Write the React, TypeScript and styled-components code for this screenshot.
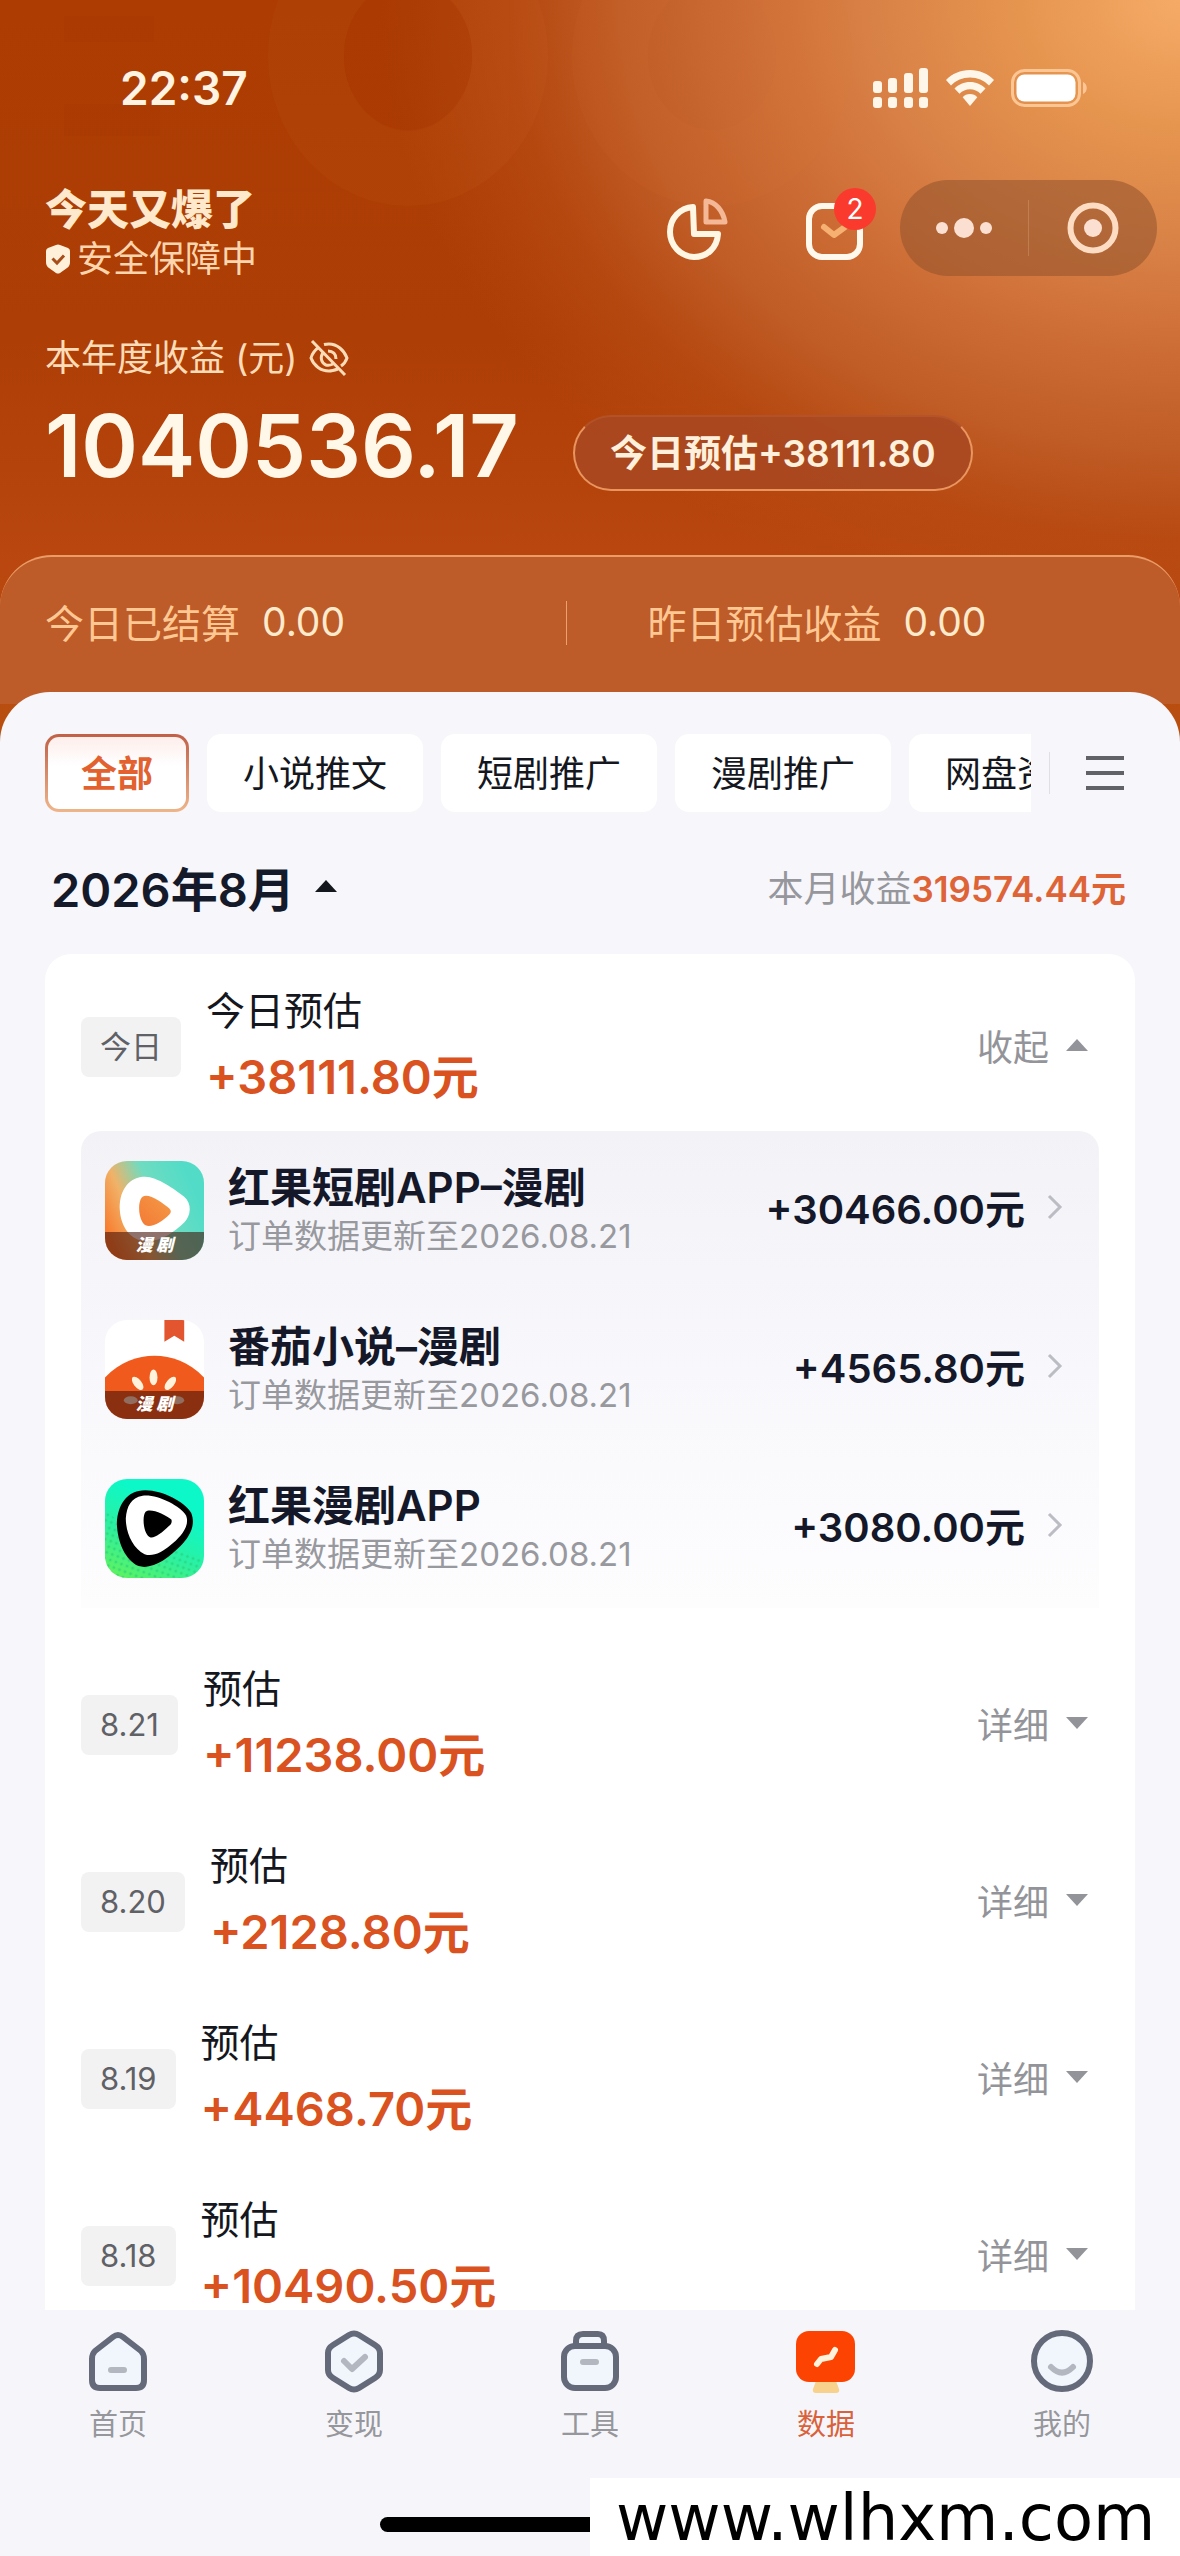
import React from 'react';
import styled, { createGlobalStyle, css } from 'styled-components';

const GlobalStyle = createGlobalStyle`
  * {
    box-sizing: border-box;
  }

  body {
    margin: 0;
    background: #f6f6fb;
    font-family: Inter, 'Noto Sans CJK SC', sans-serif;
  }

  button {
    font-family: inherit;
    border: none;
    padding: 0;
    background: none;
    cursor: pointer;
  }

  svg {
    display: block;
    flex: none;
  }
`;

const Page = styled.div`
  position: relative;
  display: flex;
  flex-direction: column;
  height: 100vh;
  overflow: hidden;
  background: #f6f6fb;
`;

const Hero = styled.header`
  position: relative;
  flex: none;
  height: 754px;
  margin-bottom: -62px;
  overflow: hidden;
  color: #fff3e2;
  background:
    radial-gradient(
      ellipse 800px 640px at 100% 0%,
      #f5ab66 0%,
      #e6954f 20%,
      #d98247 38%,
      #cf7038 52%,
      #c05c26 70%,
      rgba(184, 76, 20, 0.7) 84%,
      rgba(178, 66, 8, 0) 100%
    ),
    linear-gradient(180deg, #ac3c02 0%, #ad3e05 45%, #b9470f 75%, #b8500f 100%);
`;

const HeroPattern = styled.svg`
  position: absolute;
  top: 0;
  left: 0;
`;

const StatusBar = styled.div`
  position: relative;
  display: flex;
  align-items: center;
  justify-content: space-between;
  height: 176px;
  padding: 0 92px 0 120px;
`;

const Clock = styled.span`
  font-size: 46px;
  font-weight: 600;
`;

const StatusIcons = styled.div`
  display: flex;
  align-items: center;
  gap: 16px;
`;

const TopRow = styled.div`
  position: relative;
  display: flex;
  align-items: center;
  justify-content: space-between;
  height: 104px;
  padding: 0 23px 0 45px;
`;

const Greeting = styled.div`
  padding-top: 12px;
`;

const Title = styled.h1`
  margin: 0;
  font-size: 42px;
  line-height: 50px;
  font-weight: 900;
  color: #ffe9cc;
`;

const Security = styled.div`
  display: flex;
  align-items: center;
  gap: 6px;
  font-size: 36px;
  line-height: 48px;
  color: #ffd5ae;
`;

const Actions = styled.div`
  display: flex;
  align-items: center;
`;

const ActionButton = styled.button`
  position: relative;
  width: 68px;
  height: 68px;
  margin-right: 72px;
`;

const InboxButton = styled(ActionButton)`
  margin-right: 30px;
`;

const Badge = styled.span`
  position: absolute;
  top: -6px;
  right: -6px;
  width: 42px;
  height: 42px;
  border-radius: 50%;
  background: #fb3a2e;
  color: #fff;
  font-size: 28px;
  line-height: 42px;
  text-align: center;
`;

const Capsule = styled.div`
  display: flex;
  align-items: center;
  height: 96px;
  border-radius: 48px;
  background: rgba(146, 82, 44, 0.55);
`;

const CapsuleButton = styled.button`
  display: flex;
  align-items: center;
  justify-content: center;
  width: 128px;
  height: 96px;
`;

const CapsuleDivider = styled.span`
  width: 1px;
  height: 56px;
  background: rgba(255, 220, 190, 0.2);
`;

const YearLabel = styled.div`
  position: relative;
  display: flex;
  align-items: center;
  gap: 12px;
  margin-top: 52px;
  padding: 0 45px;
  font-size: 36px;
  line-height: 52px;
  color: #ffdcb8;
`;

const YearRow = styled.div`
  position: relative;
  display: flex;
  align-items: center;
  gap: 54px;
  height: 120px;
  margin-top: 2px;
  padding: 0 45px;
`;

const YearTotal = styled.strong`
  font-size: 86px;
  line-height: 104px;
  font-weight: 600;
  color: #fff8e8;
`;

const TodayPill = styled.button`
  height: 76px;
  margin-top: 14px;
  padding: 0 35px 4px;
  border: 2px solid rgba(255, 176, 116, 0.75);
  border-top-color: rgba(255, 176, 116, 0.1);
  border-radius: 38px;
  background: rgba(168, 72, 34, 0.85);
  color: #fff0dc;
  font-size: 37px;
  font-weight: 600;
`;

const Stats = styled.div`
  position: relative;
  display: flex;
  height: 149px;
  margin-top: 49px;
  padding-top: 32px;
  border-top: 2px solid #eb9d68;
  border-radius: 52px 52px 0 0;
  background: #bd5b29;
`;

const Stat = styled.div`
  display: flex;
  align-items: center;
  gap: 22px;
  width: 48%;
  height: 64px;
  padding-left: 45px;
  font-size: 39px;
  color: #ffc792;

  & + span + & {
    padding-left: 80px;
  }
`;

const StatDivider = styled.span`
  width: 1px;
  height: 44px;
  margin-top: 12px;
  background: rgba(255, 190, 140, 0.7);
`;

const StatValue = styled.span`
  color: #ffeacb;
`;

const Sheet = styled.main`
  position: relative;
  display: flex;
  flex: 1;
  flex-direction: column;
  min-height: 0;
  border-radius: 50px 50px 0 0;
  background: #f6f6fb;
`;

const FilterBar = styled.nav`
  display: flex;
  align-items: center;
  flex: none;
  padding: 42px 56px 0 45px;
`;

const FilterScroller = styled.div`
  display: flex;
  gap: 18px;
  flex: 1;
  overflow: hidden;
`;

const Chip = styled.button<{ $active?: boolean }>`
  flex: none;
  height: 78px;
  padding: 0 36px 4px;
  border-radius: 14px;
  background: #fff;
  color: #15171e;
  font-size: 36px;
  white-space: nowrap;

  ${({ $active }) =>
    $active &&
    css`
      padding: 0 33px 4px;
      border: 3px solid transparent;
      background:
        linear-gradient(180deg, #fdeeeb 0%, #fff 40%) padding-box,
        linear-gradient(180deg, #c06048 0%, #efb58a 100%) border-box;
      color: #e2612f;
      font-weight: 700;
    `}
`;

const FilterDivider = styled.span`
  width: 1px;
  height: 42px;
  margin: 0 36px 0 18px;
  background: #dfdfe4;
`;

const MonthRow = styled.div`
  display: flex;
  align-items: center;
  justify-content: space-between;
  flex: none;
  height: 142px;
  padding: 6px 54px 0 51px;
`;

const MonthButton = styled.button`
  display: flex;
  align-items: center;
  gap: 20px;
  color: #141a29;
  font-size: 47px;
  font-weight: 600;
`;

const MonthTotal = styled.div`
  color: #96979c;
  font-size: 36px;

  strong {
    color: #de6438;
    font-size: 35px;
    font-weight: 600;
  }
`;

const Card = styled.section`
  flex: 1;
  min-height: 0;
  margin: 0 45px;
  padding: 0 36px;
  overflow: hidden;
  border-radius: 26px 26px 0 0;
  background: #fff;
`;

const DayRow = styled.div`
  display: flex;
  align-items: center;
  height: 177px;
  padding: 8px 11px 0 0;
`;

const DayTag = styled.span`
  margin-right: 25px;
  padding: 0 19px;
  border-radius: 8px;
  background: #f2f2f3;
  color: #5f6166;
  font-size: 31px;
  line-height: 60px;
`;

const DayInfo = styled.div`
  flex: 1;
`;

const DayLabel = styled.div`
  color: #15171e;
  font-size: 39px;
  line-height: 60px;
`;

const DayAmount = styled.div`
  color: #d9521f;
  font-size: 47px;
  line-height: 72px;
  font-weight: 600;
`;

const ToggleButton = styled.button`
  display: flex;
  align-items: center;
  gap: 17px;
  padding-bottom: 4px;
  color: #939499;
  font-size: 36px;
`;

const AppList = styled.ul`
  margin: 0 0 24px;
  padding: 0 24px;
  border-radius: 20px 20px 0 0;
  background: linear-gradient(180deg, #f3f3f7 0%, #f8f8fc 50%, #fdfdfe 100%);
  list-style: none;
`;

const AppRow = styled.li`
  display: flex;
  align-items: center;
  height: 159px;
`;

const AppIcon = styled.span`
  position: relative;
  flex: none;
  width: 99px;
  height: 99px;
  margin-right: 24px;
  overflow: hidden;
  border-radius: 22px;
`;

const AppIconLabel = styled.span`
  position: absolute;
  right: 0;
  bottom: 0;
  left: 0;
  height: 28px;
  background: rgba(70, 20, 10, 0.6);
  color: #fff;
  font-size: 17px;
  line-height: 26px;
  font-weight: 900;
  font-style: italic;
  text-align: center;
`;

const AppText = styled.div`
  flex: 1;
`;

const AppName = styled.div`
  color: #141828;
  font-size: 42px;
  line-height: 50px;
  font-weight: 600;
`;

const AppNote = styled.div`
  color: #98999e;
  font-size: 33px;
  line-height: 46px;
`;

const AppLink = styled.a`
  display: flex;
  align-items: center;
  gap: 22px;
  padding-bottom: 8px;
  color: #141828;
  font-size: 40px;
  font-weight: 600;
  text-decoration: none;
`;

const TabBar = styled.nav`
  display: flex;
  flex: none;
  height: 246px;
  padding-top: 19px;
  background: #f6f6fa;
`;

const Tab = styled.a<{ $active?: boolean }>`
  display: flex;
  flex: 1;
  flex-direction: column;
  align-items: center;
  color: ${({ $active }) => ($active ? '#d9623c' : '#96979c')};
  font-size: 29px;
  line-height: 40px;
  text-decoration: none;

  svg {
    margin-bottom: 12px;
  }
`;

const HomeIndicator = styled.div`
  position: absolute;
  bottom: 24px;
  left: 50%;
  width: 420px;
  height: 15px;
  margin-left: -210px;
  border-radius: 8px;
  background: #000;
`;

const SiteMark = styled.a`
  position: absolute;
  right: 0;
  bottom: 0;
  width: 50%;
  height: 78px;
  padding-left: 26px;
  background: #fff;
  color: #000;
  font-family: 'DejaVu Sans', sans-serif;
  font-size: 64px;
  line-height: 80px;
  text-decoration: none;
  white-space: nowrap;
`;

interface AppEarning {
  name: string;
  amount: string;
  icon: React.ReactNode;
  tagged: boolean;
}

interface Day {
  date: string;
  amount: string;
}

const Triangle = ({ up, color }: { up?: boolean; color: string }) => (
  <svg width="22" height="12" viewBox="0 0 22 12">
    <path d={up ? 'M11 0 22 12H0Z' : 'M0 0H22L11 12Z'} fill={color} />
  </svg>
);

const SignalIcon = () => (
  <svg width="56" height="40" viewBox="0 0 56 40" fill="#fff6ea">
    <rect x="0" y="13" width="9" height="12" rx="3" />
    <rect x="15" y="10" width="9" height="15" rx="3" />
    <rect x="31" y="5" width="9" height="20" rx="3" />
    <rect x="46" y="0" width="9" height="25" rx="3" />
    <rect x="0" y="29" width="9" height="11" rx="3" />
    <rect x="15" y="29" width="9" height="11" rx="3" />
    <rect x="31" y="29" width="9" height="11" rx="3" />
    <rect x="46" y="29" width="9" height="11" rx="3" />
  </svg>
);

const WifiIcon = () => (
  <svg width="50" height="38" viewBox="0 0 50 38" fill="#fff6ea">
    <path d="M25 1C34.500 1 43 4.700 49 11L44 16.500C39 11.300 32.400 8.500 25 8.500S11 11.300 6 16.500L1 11C7 4.700 15.500 1 25 1Z" />
    <path d="M25 13C31 13 36.500 15.400 40.500 19.500L35.500 24.800C32.700 22 29 20.300 25 20.300S17.300 22 14.500 24.800L9.500 19.500C13.500 15.400 19 13 25 13Z" />
    <path d="M25 25C28 25 30.400 26.200 32.300 28.200L25 37 17.700 28.200C19.600 26.200 22 25 25 25Z" />
  </svg>
);

const BatteryIcon = () => (
  <svg width="77" height="38" viewBox="0 0 77 38">
    <rect x="1.500" y="1.500" width="67" height="35" rx="12" fill="none" stroke="#fbc694" strokeWidth="3" />
    <rect x="5.500" y="5.500" width="59" height="27" rx="8" fill="#fff" />
    <path d="M72 13C77 15 77 23 72 25Z" fill="#fbc694" />
  </svg>
);

const ShieldIcon = () => (
  <svg width="26" height="30" viewBox="0 0 26 30">
    <path
      d="M11 1Q13 0 15 1L23 4Q25 5 25 7V18Q25 22 22 24L15 29Q13 30 11 29L4 24Q1 22 1 18V7Q1 5 3 4Z"
      fill="#fff0da"
    />
    <path d="M7.500 14.500 12 19 19 11.500" fill="none" stroke="#a84c18" strokeWidth="3" />
  </svg>
);

const HiddenEyeIcon = () => (
  <svg width="40" height="38" viewBox="0 0 40 38" fill="none" stroke="#ffdcb8" strokeWidth="3">
    <path d="M10 8C6 11 3 15 2 19 5 27 12 32 20 32 23 32 26 31 29 30M15 5.500C17 5 18 5 20 5 28 5 35 11 38 19 37 22 35 25 32 27" />
    <path d="M14 14C11 18 12 24 17 26 20 27 22 26 24 25M19 12C24 12 27 15 27 20" />
    <path d="M3 2 36 36" />
  </svg>
);

const PieIcon = () => (
  <svg width="68" height="68" viewBox="0 0 68 68" fill="none" strokeLinejoin="round">
    <path d="M31 13C18 14 8 24 8 38A25 25 0 0 0 32 63C45 63 55 54 56 40H32Z" stroke="#fff6e4" strokeWidth="6" />
    <path d="M44 7V28H63C61 17 54 8 44 7Z" stroke="#f4b896" strokeWidth="5" />
  </svg>
);

const InboxIcon = () => (
  <svg width="68" height="68" viewBox="0 0 68 68" fill="none">
    <rect x="7" y="12" width="51" height="51" rx="13" stroke="#fff8ec" strokeWidth="6" />
    <path d="M22 33 32 41 43 33" stroke="#f5b072" strokeWidth="6" strokeLinecap="round" strokeLinejoin="round" />
  </svg>
);

const ShortDramaIcon = () => (
  <svg width="99" height="99" viewBox="0 0 100 100">
    <defs>
      <linearGradient id="short-bg" x1="0" y1="0.700" x2="0.900" y2="0.300">
        <stop offset="0" stopColor="#f97a2c" />
        <stop offset="0.300" stopColor="#f0b268" />
        <stop offset="0.600" stopColor="#6fdcc0" />
        <stop offset="1" stopColor="#52dcc8" />
      </linearGradient>
      <linearGradient id="short-play" x1="0" y1="1" x2="1" y2="0">
        <stop offset="0" stopColor="#f37a34" />
        <stop offset="1" stopColor="#f49a48" />
      </linearGradient>
    </defs>
    <rect width="100" height="100" fill="url(#short-bg)" />
    <path
      d="M38 16C50 14 70 28 80 36 88 43 87 55 80 62 71 71 58 80 44 81 26 82 16 66 15 50 14 32 22 18 38 16Z"
      fill="#fff"
    />
    <path d="M38 36C44 32 58 42 65 48 67 50 67 52 65 54 58 61 47 68 41 65 34 61 32 41 38 36Z" fill="url(#short-play)" />
  </svg>
);

const TomatoIcon = () => (
  <svg width="99" height="99" viewBox="0 0 100 100">
    <rect width="100" height="100" fill="#fff" />
    <path d="M60 0H80V22L70 16 60 22Z" fill="#e2552f" />
    <path d="M0 58C15 42 33 36 50 36S85 42 100 58V100H0Z" fill="#f05a1c" />
    <ellipse cx="49" cy="58" rx="4" ry="8" fill="#fff3dc" />
    <ellipse cx="33" cy="64" rx="4" ry="8" transform="rotate(-38 33 64)" fill="#fff3dc" />
    <ellipse cx="66" cy="64" rx="4" ry="8" transform="rotate(38 66 64)" fill="#fff3dc" />
    <ellipse cx="26" cy="81" rx="7" ry="4" fill="#fff3dc" />
    <ellipse cx="73" cy="81" rx="7" ry="4" fill="#fff3dc" />
  </svg>
);

const ComicDramaIcon = () => (
  <svg width="99" height="99" viewBox="0 0 100 100">
    <defs>
      <linearGradient id="comic-bg" x1="0.100" y1="1" x2="0.500" y2="0.200">
        <stop offset="0" stopColor="#62f25c" />
        <stop offset="0.500" stopColor="#2df0a0" />
        <stop offset="1" stopColor="#0cf8c8" />
      </linearGradient>
      <pattern id="comic-dots" width="6" height="6" patternUnits="userSpaceOnUse" patternTransform="rotate(20)">
        <circle cx="3" cy="3" r="1.500" fill="#22cf78" />
      </pattern>
    </defs>
    <rect width="100" height="100" fill="url(#comic-bg)" />
    <path d="M0 30 30 60 100 80V100H0Z" fill="url(#comic-dots)" opacity="0.600" />
    <path d="M34 12C52 8 80 22 87 34 92 46 86 58 76 68 64 80 48 92 34 88 20 82 12 62 12 44 13 26 22 14 34 12Z" fill="#000" />
    <path d="M38 17C52 15 76 27 82 37 86 48 76 59 66 67 58 74 48 79 40 76 28 70 21 54 21 40 22 28 26 19 38 17Z" fill="#fff" />
    <path d="M41 33C46 29 61 36 67 41 68 43 67 46 64 48 58 54 50 60 46 59 39 57 37 38 41 33Z" fill="#000" />
  </svg>
);

const line = { fill: '#f1f6fd', stroke: '#656a7a', strokeWidth: 6, strokeLinejoin: 'round' as const };
const accent = {
  fill: 'none',
  stroke: '#b3b7bf',
  strokeWidth: 6,
  strokeLinecap: 'round' as const,
  strokeLinejoin: 'round' as const,
};

const tabs = [
  {
    label: '首页',
    icon: (
      <>
        <path d="M27 8Q32 4 37 8L55 22Q58 25 58 30V51Q58 59 50 59H14Q6 59 6 51V30Q6 25 9 22Z" {...line} />
        <path d="M25 41H38" {...accent} />
      </>
    ),
  },
  {
    label: '变现',
    icon: (
      <>
        <path d="M27 6Q32 3 37 6L53 16Q58 19 58 24V41Q58 46 53 49L37 59Q32 62 27 59L11 49Q6 46 6 41V24Q6 19 11 16Z" {...line} />
        <path d="M22 32 30 40 43 28" {...accent} />
      </>
    ),
  },
  {
    label: '工具',
    icon: (
      <>
        <path d="M18 17V12Q18 5 25 5H40Q46 5 46 12V17" {...line} />
        <rect x="6" y="17" width="52" height="42" rx="11" {...line} />
        <path d="M25 33H38" {...accent} />
      </>
    ),
  },
  {
    label: '数据',
    active: true,
    icon: (
      <>
        <path d="M22 52H42L45 60Q46 64 42 64H22Q18 64 19 60Z" fill="#f8d28c" />
        <rect x="2" y="2" width="59" height="51" rx="13" fill="#fc4302" />
        <path
          d="M23 35 27 30 37 28 41 21"
          fill="none"
          stroke="#fff3dc"
          strokeWidth="6"
          strokeLinecap="round"
          strokeLinejoin="round"
        />
      </>
    ),
  },
  {
    label: '我的',
    icon: (
      <>
        <circle cx="32" cy="32" r="28" {...line} />
        <path d="M21 38Q32 49 43 38" {...accent} />
      </>
    ),
  },
];

const filters = ['全部', '小说推文', '短剧推广', '漫剧推广', '网盘资源'];

const apps: AppEarning[] = [
  { name: '红果短剧APP–漫剧', amount: '+30466.00元', icon: <ShortDramaIcon />, tagged: true },
  { name: '番茄小说–漫剧', amount: '+4565.80元', icon: <TomatoIcon />, tagged: true },
  { name: '红果漫剧APP', amount: '+3080.00元', icon: <ComicDramaIcon />, tagged: false },
];

const days: Day[] = [
  { date: '8.21', amount: '+11238.00元' },
  { date: '8.20', amount: '+2128.80元' },
  { date: '8.19', amount: '+4468.70元' },
  { date: '8.18', amount: '+10490.50元' },
];

const App: React.FC = () => (
  <>
    <GlobalStyle />
    <Page>
      <Hero>
        <HeroPattern width="1180" height="340" viewBox="0 0 1180 340">
          <g fill="none" stroke="#e07a3a" strokeWidth="76" opacity="0.070">
            <ellipse cx="408" cy="56" rx="102" ry="112" />
            <ellipse cx="712" cy="56" rx="102" ry="112" />
          </g>
          <g fill="#a03000" opacity="0.120">
            <rect x="64" y="16" width="90" height="26" />
            <rect x="64" y="104" width="96" height="32" />
            <ellipse cx="408" cy="56" rx="64" ry="75" />
          </g>
        </HeroPattern>
        <StatusBar>
          <Clock>22:37</Clock>
          <StatusIcons>
            <SignalIcon />
            <WifiIcon />
            <BatteryIcon />
          </StatusIcons>
        </StatusBar>

        <TopRow>
          <Greeting>
            <Title>今天又爆了</Title>
            <Security>
              <ShieldIcon />
              安全保障中
            </Security>
          </Greeting>
          <Actions>
            <ActionButton aria-label="统计">
              <PieIcon />
            </ActionButton>
            <InboxButton aria-label="消息">
              <InboxIcon />
              <Badge>2</Badge>
            </InboxButton>
            <Capsule>
              <CapsuleButton aria-label="更多">
                <svg width="56" height="22" viewBox="0 0 56 22" fill="#fbe0d2">
                  <circle cx="6" cy="11" r="6" />
                  <circle cx="28" cy="11" r="10" />
                  <circle cx="50" cy="11" r="6" />
                </svg>
              </CapsuleButton>
              <CapsuleDivider />
              <CapsuleButton aria-label="关闭">
                <svg width="52" height="52" viewBox="0 0 52 52">
                  <circle cx="26" cy="26" r="22.500" fill="none" stroke="#fddcc4" strokeWidth="6" />
                  <circle cx="26" cy="26" r="9" fill="#fbe0d2" />
                </svg>
              </CapsuleButton>
            </Capsule>
          </Actions>
        </TopRow>

        <YearLabel>
          本年度收益 (元)
          <HiddenEyeIcon />
        </YearLabel>
        <YearRow>
          <YearTotal>1040536.17</YearTotal>
          <TodayPill>今日预估+38111.80</TodayPill>
        </YearRow>

        <Stats>
          <Stat>
            今日已结算 <StatValue>0.00</StatValue>
          </Stat>
          <StatDivider />
          <Stat>
            昨日预估收益 <StatValue>0.00</StatValue>
          </Stat>
        </Stats>
      </Hero>

      <Sheet>
        <FilterBar>
          <FilterScroller>
            {filters.map((filter, index) => (
              <Chip key={filter} $active={index === 0}>
                {filter}
              </Chip>
            ))}
          </FilterScroller>
          <FilterDivider />
          <button aria-label="全部分类">
            <svg width="38" height="34" viewBox="0 0 38 34" fill="#606268">
              <rect width="38" height="4" />
              <rect y="15" width="38" height="4" />
              <rect y="30" width="38" height="4" />
            </svg>
          </button>
        </FilterBar>

        <MonthRow>
          <MonthButton>
            2026年8月
            <Triangle up color="#15171e" />
          </MonthButton>
          <MonthTotal>
            本月收益<strong>319574.44元</strong>
          </MonthTotal>
        </MonthRow>

        <Card>
          <DayRow>
            <DayTag>今日</DayTag>
            <DayInfo>
              <DayLabel>今日预估</DayLabel>
              <DayAmount>+38111.80元</DayAmount>
            </DayInfo>
            <ToggleButton>
              收起
              <Triangle up color="#939499" />
            </ToggleButton>
          </DayRow>

          <AppList>
            {apps.map((app) => (
              <AppRow key={app.name}>
                <AppIcon>
                  {app.icon}
                  {app.tagged && <AppIconLabel>漫 剧</AppIconLabel>}
                </AppIcon>
                <AppText>
                  <AppName>{app.name}</AppName>
                  <AppNote>订单数据更新至2026.08.21</AppNote>
                </AppText>
                <AppLink href="#">
                  {app.amount}
                  <svg width="28" height="28" viewBox="0 0 28 28" fill="none" stroke="#bcbdc4" strokeWidth="3">
                    <path d="M2 3 13 14 2 25" />
                  </svg>
                </AppLink>
              </AppRow>
            ))}
          </AppList>

          {days.map((day) => (
            <DayRow key={day.date}>
              <DayTag>{day.date}</DayTag>
              <DayInfo>
                <DayLabel>预估</DayLabel>
                <DayAmount>{day.amount}</DayAmount>
              </DayInfo>
              <ToggleButton>
                详细
                <Triangle color="#939499" />
              </ToggleButton>
            </DayRow>
          ))}
        </Card>
      </Sheet>

      <TabBar>
        {tabs.map((tab) => (
          <Tab key={tab.label} href="#" $active={tab.active}>
            <svg width="64" height="64" viewBox="0 0 64 64">
              {tab.icon}
            </svg>
            {tab.label}
          </Tab>
        ))}
      </TabBar>
      <HomeIndicator />
      <SiteMark href="#">www.wlhxm.com</SiteMark>
    </Page>
  </>
);

export default App;
